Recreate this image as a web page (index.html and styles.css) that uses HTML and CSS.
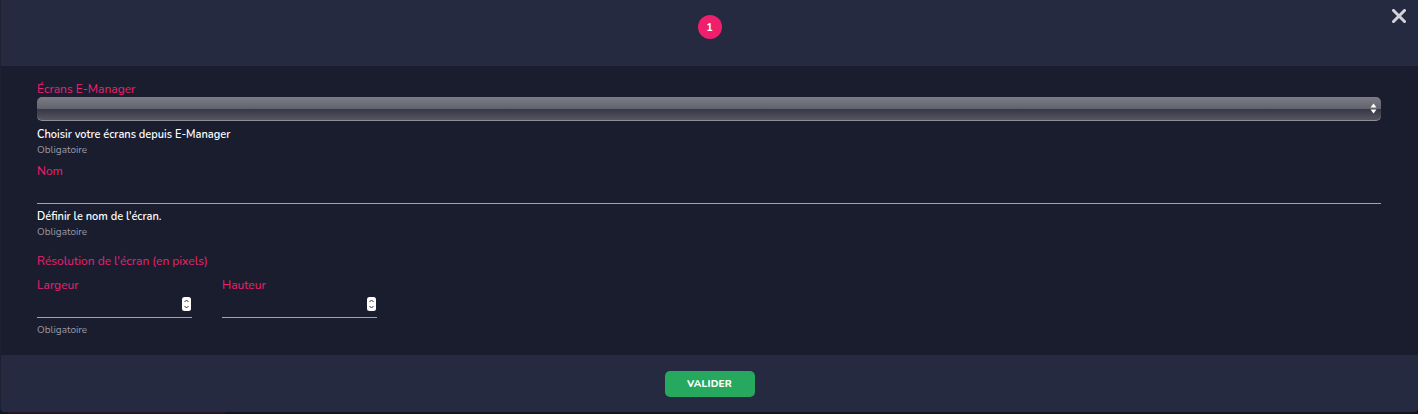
FILE: index.html
```html
<!DOCTYPE html>
<html lang="fr">
<head>
  <meta charset="UTF-8" />
  <meta name="viewport" content="width=device-width, initial-scale=1.0"/>
  <title>Ajouter un écran</title>
  <link rel="stylesheet" href="styles.css">
</head>
<body>
  <div class="modal">
    <div class="modal-header">
      <span class="etape">1</span>
      <button class="fermer" type="button" aria-label="Fermer">
        <svg width="14" height="14" viewBox="0 0 14 14">
          <path d="M1.5 1.5 L12.5 12.5 M12.5 1.5 L1.5 12.5" stroke="#d2d3da" stroke-width="3" stroke-linecap="square"/>
        </svg>
      </button>
    </div>

    <form class="modal-body" id="formEcran">
      <div class="champ">
        <label class="etiquette" for="ecrans">Écrans E-Manager</label>
        <div class="select-wrap">
          <select id="ecrans" class="select"></select>
          <svg class="fleches" width="7" height="11" viewBox="0 0 7 11">
            <path d="M3.5 0.5 L6.5 4.5 L0.5 4.5 Z M3.5 10.5 L6.5 6.5 L0.5 6.5 Z" fill="#ffffff"/>
          </svg>
        </div>
        <div class="aide">Choisir votre écrans depuis E-Manager</div>
        <div class="requis">Obligatoire</div>
      </div>

      <div class="champ">
        <label class="etiquette" for="nom">Nom</label>
        <input type="text" id="nom" class="texte" />
        <div class="aide">Définir le nom de l'écran.</div>
        <div class="requis">Obligatoire</div>
      </div>

      <div class="champ champ-resolution">
        <div class="etiquette">Résolution de l'écran (en pixels)</div>
        <div class="ligne">
          <div class="sous-champ">
            <label class="etiquette" for="largeur">Largeur</label>
            <div class="nombre">
              <input type="text" id="largeur" inputmode="numeric" />
              <span class="spin">
                <svg width="9" height="14" viewBox="0 0 9 14">
                  <rect x="0" y="0" width="9" height="14" rx="2.5" fill="#ffffff"/>
                  <path d="M2.5 5 L4.5 3 L6.5 5 M2.5 9 L4.5 11 L6.5 9" stroke="#333" stroke-width="1" fill="none"/>
                </svg>
              </span>
            </div>
          </div>
          <div class="sous-champ">
            <label class="etiquette" for="hauteur">Hauteur</label>
            <div class="nombre">
              <input type="text" id="hauteur" inputmode="numeric" />
              <span class="spin">
                <svg width="9" height="14" viewBox="0 0 9 14">
                  <rect x="0" y="0" width="9" height="14" rx="2.5" fill="#ffffff"/>
                  <path d="M2.5 5 L4.5 3 L6.5 5 M2.5 9 L4.5 11 L6.5 9" stroke="#333" stroke-width="1" fill="none"/>
                </svg>
              </span>
            </div>
          </div>
        </div>
        <div class="requis requis-bas">Obligatoire</div>
      </div>
    </form>

    <div class="modal-footer">
      <button type="submit" form="formEcran" class="valider">VALIDER</button>
    </div>
  </div>
  <div class="derriere"><span></span></div>
</body>
</html>
```

FILE: styles.css
```css
* {
  box-sizing: border-box;
}

body {
  margin: 0;
  background: #12151f;
  font-family: "Nunito", Lato, "Noto Sans", sans-serif;
  height: 414px;
  overflow: hidden;
}

.modal {
  height: 412px;
  display: flex;
  flex-direction: column;
  background: #191d2e;
  border-left: 1px solid #1c2031;
  border-radius: 0 0 4px 4px;
  overflow: hidden;
}

.modal-header {
  height: 66px;
  background: #252a40;
  display: flex;
  justify-content: center;
  align-items: flex-start;
  padding-top: 15px;
  position: relative;
}

.etape {
  width: 24px;
  height: 24px;
  border-radius: 50%;
  background: #ef1f6c;
  color: #ffffff;
  font-size: 11px;
  font-weight: 700;
  display: flex;
  align-items: center;
  justify-content: center;
}

.fermer {
  position: absolute;
  top: 9px;
  right: 12px;
  background: none;
  border: none;
  padding: 0;
  cursor: pointer;
  line-height: 0;
}

.modal-body {
  flex: 1;
  margin: 0;
  padding: 16px 37px 0 36px;
}

.champ + .champ {
  margin-top: 8px;
}

.champ-resolution {
  margin-top: 16px !important;
}

.etiquette {
  display: block;
  color: #ef2170;
  font-size: 12px;
  line-height: 14px;
}

.select-wrap {
  position: relative;
  margin-top: 1px;
}

.select {
  display: block;
  width: 100%;
  height: 24px;
  appearance: none;
  -webkit-appearance: none;
  border: none;
  border-bottom: 1px solid #8d8e96;
  border-radius: 5px;
  background: linear-gradient(#7b7c86, #62636d 50%, #353643 50%, #555661);
  color: #ffffff;
}

.fleches {
  position: absolute;
  right: 4px;
  top: 6px;
}

.aide {
  margin-top: 7px;
  color: #ffffff;
  font-size: 11px;
  font-weight: 600;
  line-height: 14px;
}

.requis {
  margin-top: 2px;
  color: #9a9ba3;
  font-size: 10px;
  line-height: 12px;
}

.requis-bas {
  margin-top: 6px;
}

.texte {
  display: block;
  width: 100%;
  height: 26px;
  background: transparent;
  border: none;
  border-bottom: 1px solid #a3a4aa;
  color: #ffffff;
  outline: none;
}

.texte + .aide {
  margin-top: 6px;
}

.ligne {
  display: flex;
  gap: 30px;
  margin-top: 10px;
}

.sous-champ {
  width: 155px;
}

.nombre {
  height: 26px;
  display: flex;
  align-items: flex-start;
  border-bottom: 1px solid #a3a4aa;
  padding-top: 5px;
  padding-right: 1px;
}

.nombre input {
  flex: 1;
  min-width: 0;
  background: transparent;
  border: none;
  color: #ffffff;
  outline: none;
}

.spin {
  line-height: 0;
}

.modal-footer {
  height: 57px;
  background: #252a40;
  display: flex;
  justify-content: center;
  padding-top: 16px;
}

.valider {
  width: 90px;
  height: 26px;
  border: none;
  border-radius: 5px;
  background: #26a95f;
  color: #ffffff;
  font-family: inherit;
  font-size: 10px;
  font-weight: 800;
  letter-spacing: 0.2px;
  cursor: pointer;
}

.valider:hover {
  background: #1f8f50;
}

.derriere {
  height: 2px;
  display: flex;
}

.derriere span {
  width: 217px;
  margin-left: 8px;
  background: #2c1420;
}
```
